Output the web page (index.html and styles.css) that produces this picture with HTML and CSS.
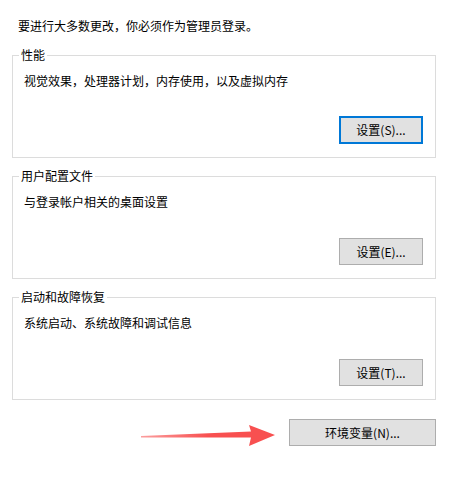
FILE: index.html
```html
<!doctype html>
<html>
<head>
<meta charset="utf-8">
<title>系统属性 - 高级</title>
  <link rel="stylesheet" href="styles.css">
</head>
<body>
  <p class="intro">要进行大多数更改，你必须作为管理员登录。</p>

  <fieldset class="group">
    <legend>性能</legend>
    <div class="desc">视觉效果，处理器计划，内存使用，以及虚拟内存</div>
    <div class="actions">
      <button class="btn btn-default" type="button">设置(S)...</button>
    </div>
  </fieldset>

  <fieldset class="group">
    <legend>用户配置文件</legend>
    <div class="desc">与登录帐户相关的桌面设置</div>
    <div class="actions">
      <button class="btn" type="button">设置(E)...</button>
    </div>
  </fieldset>

  <fieldset class="group">
    <legend>启动和故障恢复</legend>
    <div class="desc">系统启动、系统故障和调试信息</div>
    <div class="actions">
      <button class="btn" type="button">设置(T)...</button>
    </div>
  </fieldset>

  <div class="bottom">
    <!-- 标注箭头 -->
    <svg class="arrow" width="138" height="26" viewBox="0 0 138 26">
      <defs>
        <linearGradient id="fade" x1="0" y1="0" x2="1" y2="0">
          <stop offset="0" stop-color="#f85050" stop-opacity="0.55"/>
          <stop offset="0.5" stop-color="#f85050" stop-opacity="1"/>
        </linearGradient>
      </defs>
      <polygon fill="url(#fade)" points="2,13 112,8.5 110,2 136,12 110,23 112,14.5 2,14.5"/>
    </svg>
    <button class="btn btn-wide" type="button">环境变量(N)...</button>
  </div>
</body>
</html>
```

FILE: styles.css
```css
body {
  margin: 0;
  padding-top: 18px;
  background: #fff;
  color: #000;
  font-family: "Noto Sans CJK SC", "Microsoft YaHei", sans-serif;
  font-size: 12px;
  line-height: 16px;
}

.intro {
  margin: 0 0 13px 18px;
}

.group {
  box-sizing: border-box;
  display: flex;
  flex-direction: column;
  width: 424px;
  height: 111px;
  margin: 0 0 10px 12px;
  padding: 10px 12px 13px 0;
  border: 1px solid #dcdcdc;
}

.group legend {
  margin-left: 6px;
  padding: 0 2px;
  line-height: 16px;
}

.desc {
  flex: 1;
  padding-left: 11px;
}

.actions {
  display: flex;
  justify-content: flex-end;
}

.btn {
  box-sizing: border-box;
  width: 84px;
  height: 27px;
  padding: 0;
  background: #e1e1e1;
  border: 1px solid #adadad;
  border-radius: 0;
  color: #000;
  font-family: inherit;
  font-size: 12px;
  line-height: 16px;
}

.btn-default {
  height: 28px;
  border: 2px solid #0078d7;
}

.btn-wide {
  width: 147px;
}

.bottom {
  display: flex;
  justify-content: flex-end;
  align-items: flex-start;
  width: 424px;
  margin: 19px 0 0 12px;
}

.arrow {
  display: block;
  margin: 4px 12px 0 0;
}
```
